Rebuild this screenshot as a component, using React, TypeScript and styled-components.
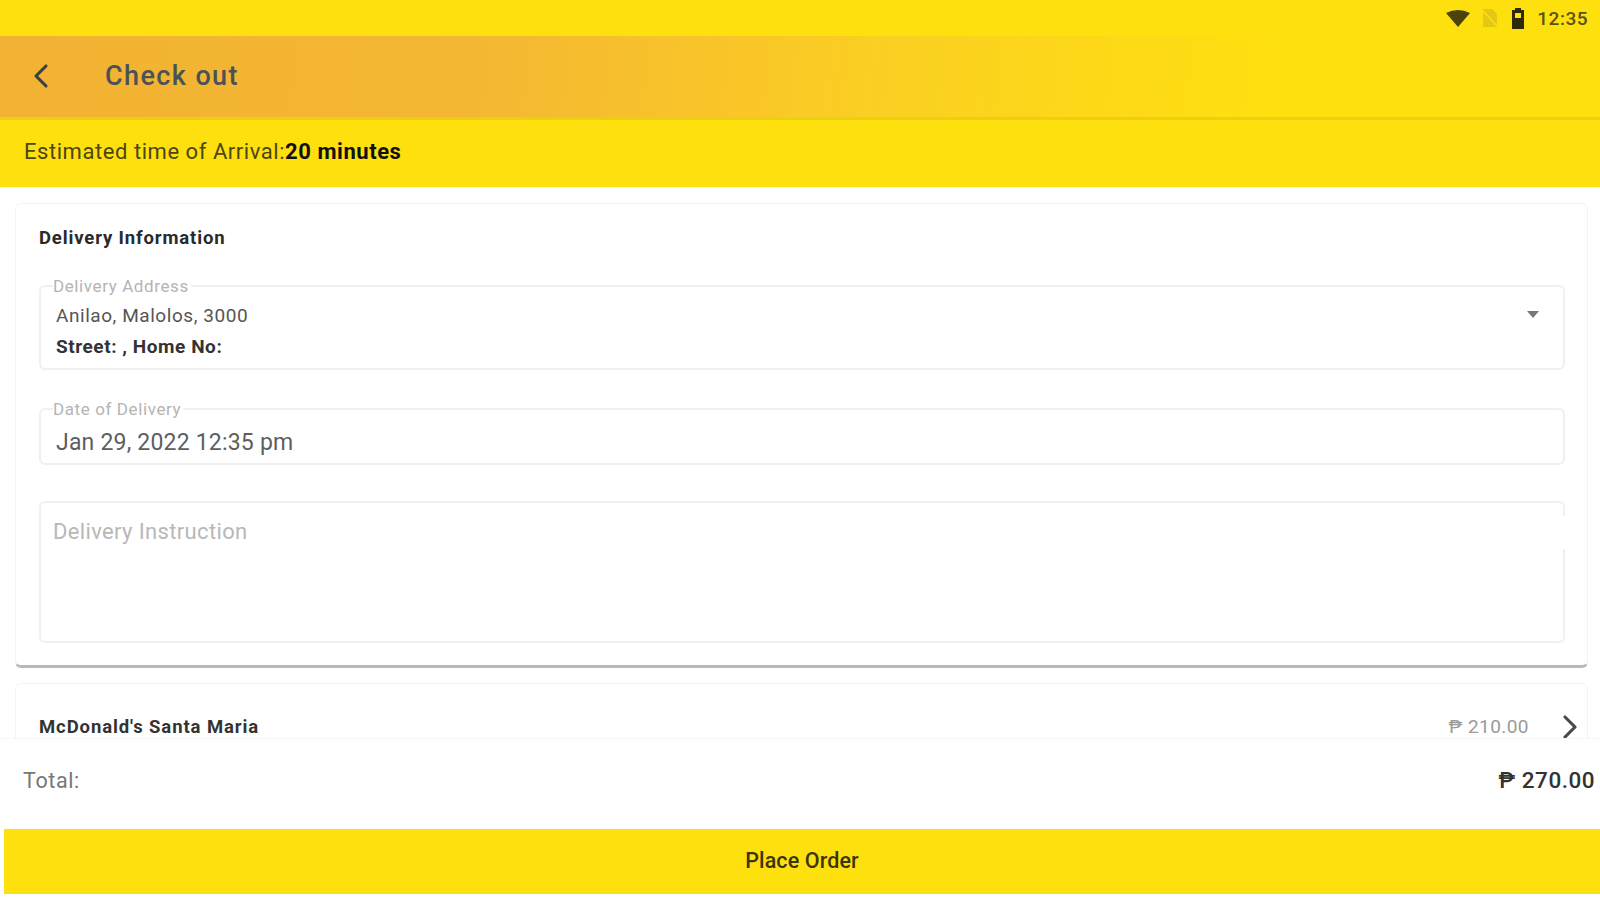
import React from 'react';
import styled, { createGlobalStyle } from 'styled-components';
import { ChevronLeft, ChevronRight } from 'lucide-react';

const GlobalStyle = createGlobalStyle`
    html, body {
        margin: 0;
        padding: 0;
        background: #fff;
        font-family: Roboto, "Liberation Sans", sans-serif;
    }
    * {
        box-sizing: border-box;
    }
`;

const Page = styled.div`
    display: flex;
    flex-direction: column;
    width: 1600px;
    height: 900px;
    overflow: hidden;
    background: #fff;
`;

const StatusBar = styled.div`
    display: flex;
    flex: none;
    height: 36px;
    padding: 0 12px 0 0;
    align-items: center;
    justify-content: flex-end;
    background: #ffe00f;
    color: #4a430c;
`;

const StatusIcon = styled.svg<{ $gap: number }>`
    display: block;
    margin-right: ${(p) => p.$gap}px;
`;

const Clock = styled.span`
    font-size: 19px;
    font-weight: 500;
    letter-spacing: .5px;
    color: #5a5210;
`;

const AppBar = styled.header`
    display: flex;
    flex: none;
    height: 84px;
    padding: 0 0 2px 21px;
    align-items: center;
    background: linear-gradient(96deg, #f2b233 0%, #f4b733 30%, #fbcf22 55%, #ffe00f 80%);
    border-bottom: 3px solid #ecd00f;
`;

const BackIcon = styled(ChevronLeft)`
    flex: none;
    color: #3c4043;
`;

const Title = styled.h1`
    margin: 0 0 0 44px;
    font-size: 27px;
    font-weight: 500;
    letter-spacing: 1.4px;
    color: #4a5256;
`;

const EtaBar = styled.div`
    flex: none;
    height: 67px;
    padding: 0 24px;
    line-height: 63px;
    font-size: 22px;
    letter-spacing: .55px;
    background: #ffe00f;
    color: #4c4612;

    strong {
        font-weight: 700;
        color: #111;
    }
`;

const Content = styled.main`
    display: flex;
    flex: 1;
    flex-direction: column;
    gap: 15px;
    padding: 16px 12px 0 15px;
    min-height: 0;
    overflow: hidden;
`;

const Card = styled.section`
    flex: none;
    padding: 22px 22px 24px 23px;
    background: #fff;
    border: 1px solid #f3f3f3;
    border-radius: 6px;
`;

const DeliveryCard = styled(Card)`
    height: 465px;
    border-bottom: 3px solid #b9b9b9;
`;

const CardTitle = styled.h2`
    margin: 0 0 29px;
    font-size: 18.5px;
    line-height: 24px;
    font-weight: 700;
    letter-spacing: .85px;
    color: #2a2a2a;
`;

const Field = styled.fieldset<{ $height: number; $space: number }>`
    display: block;
    height: ${(p) => p.$height}px;
    margin: 0 0 ${(p) => p.$space}px;
    padding: 0 15px;
    border: 2px solid #f0f0f0;
    border-radius: 6px;
    min-width: 0;
`;

const FieldLegend = styled.legend`
    margin-left: -3px;
    padding: 0 2px 0 0;
    font-size: 17px;
    line-height: 14px;
    letter-spacing: .6px;
    color: #b4b4b4;
`;

const AddressRow = styled.div`
    display: flex;
    padding-top: 8px;
    justify-content: space-between;
`;

const AddressLine = styled.div`
    font-size: 19px;
    line-height: 30.5px;
    letter-spacing: .55px;
    color: #555;
`;

const StreetLine = styled(AddressLine)`
    font-weight: 700;
    color: #333;
`;

const DropArrow = styled.span`
    width: 0;
    height: 0;
    margin: 10px 9px 0 0;
    border-left: 6px solid transparent;
    border-right: 6px solid transparent;
    border-top: 7px solid #777;
`;

const DateValue = styled.div`
    padding-top: 12px;
    font-size: 23px;
    line-height: 30px;
    letter-spacing: .2px;
    color: #5e5e5e;
`;

const InstructionBox = styled.div`
    position: relative;
    height: 142px;
    padding: 15px 12px;
    border: 2px solid #f0f0f0;
    border-radius: 6px;
    font-size: 22px;
    line-height: 28px;
    letter-spacing: .35px;
    color: #b8b8b8;

    &::after {
        content: '';
        position: absolute;
        top: 13px;
        right: -2px;
        width: 2px;
        height: 33px;
        background: #fff;
    }
`;

const StoreCard = styled(Card)`
    display: flex;
    padding-top: 32px;
    align-items: center;
    justify-content: space-between;
`;

const StoreName = styled.span`
    font-size: 18.5px;
    line-height: 22px;
    font-weight: 700;
    letter-spacing: .9px;
    color: #333;
`;

const StoreSide = styled.div`
    display: flex;
    height: 22px;
    margin-right: -25px;
    align-items: center;
    gap: 21px;
`;

const StorePrice = styled.span`
    font-size: 19px;
    line-height: 22px;
    letter-spacing: .45px;
    color: #9a9a9a;
`;

const ForwardIcon = styled(ChevronRight)`
    flex: none;
    color: #4a4a4a;
`;

const Footer = styled.footer`
    display: flex;
    flex: none;
    flex-direction: column;
    height: 162px;
    padding-bottom: 6px;
    background: #fff;
    border-top: 1px solid #f6f6f6;
`;

const TotalRow = styled.div`
    display: flex;
    height: 90px;
    padding: 0 5px 8px 23px;
    align-items: center;
    justify-content: space-between;
`;

const TotalLabel = styled.span`
    font-size: 21.5px;
    letter-spacing: .6px;
    color: #777;
`;

const TotalValue = styled.span`
    font-size: 22.5px;
    font-weight: 500;
    letter-spacing: .5px;
    color: #333;
`;

const PlaceOrder = styled.button`
    display: block;
    width: 1596px;
    height: 65px;
    margin-left: 4px;
    padding: 0 0 2px;
    border: 0;
    background: #ffe00f;
    font-family: inherit;
    font-size: 21.5px;
    font-weight: 500;
    letter-spacing: .1px;
    color: #3a3608;
`;

const App = () => {
    return (
        <>
            <GlobalStyle />
            <Page>
                <StatusBar>
                    <StatusIcon $gap={10} width="26" height="20" viewBox="0 0 26 20">
                        <path d="M1 5 Q13 -1 25 5 L13 19 Z" fill="currentColor" />
                    </StatusIcon>
                    <StatusIcon $gap={13} width="17" height="20" viewBox="0 0 17 20">
                        <path d="M2 1 H11 L16 6 V19 H2 Z" fill="#e3c814" />
                        <path d="M2 3 L16 18" stroke="#ffe00f" strokeWidth="1.5" />
                    </StatusIcon>
                    <StatusIcon $gap={12} width="14" height="21" viewBox="0 0 14 21">
                        <path d="M4 0 H10 V2 H13 V21 H1 V2 H4 Z" fill="#2e2a08" />
                        <path d="M4 5 H10 V10 H4 Z" fill="#ffe00f" />
                    </StatusIcon>
                    <Clock>12:35</Clock>
                </StatusBar>
                <AppBar>
                    <BackIcon size={40} strokeWidth={1.9} />
                    <Title>Check out</Title>
                </AppBar>
                <EtaBar>
                    Estimated time of Arrival:<strong>20 minutes</strong>
                </EtaBar>
                <Content>
                    <DeliveryCard>
                        <CardTitle>Delivery Information</CardTitle>
                        <Field $height={91} $space={32}>
                            <FieldLegend>Delivery Address</FieldLegend>
                            <AddressRow>
                                <div>
                                    <AddressLine>Anilao, Malolos, 3000</AddressLine>
                                    <StreetLine>Street: , Home No:</StreetLine>
                                </div>
                                <DropArrow />
                            </AddressRow>
                        </Field>
                        <Field $height={63} $space={36}>
                            <FieldLegend>Date of Delivery</FieldLegend>
                            <DateValue>Jan 29, 2022 12:35 pm</DateValue>
                        </Field>
                        <InstructionBox>Delivery Instruction</InstructionBox>
                    </DeliveryCard>
                    <StoreCard>
                        <StoreName>McDonald's Santa Maria</StoreName>
                        <StoreSide>
                            <StorePrice>₱ 210.00</StorePrice>
                            <ForwardIcon size={40} strokeWidth={1.9} />
                        </StoreSide>
                    </StoreCard>
                </Content>
                <Footer>
                    <TotalRow>
                        <TotalLabel>Total:</TotalLabel>
                        <TotalValue>₱ 270.00</TotalValue>
                    </TotalRow>
                    <PlaceOrder>Place Order</PlaceOrder>
                </Footer>
            </Page>
        </>
    );
};

export default App;
